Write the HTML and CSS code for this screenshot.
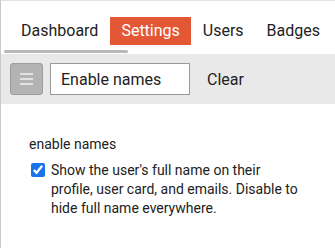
FILE: index.html
```html
<!DOCTYPE html>
<html lang="en">
<head>
    <meta charset="UTF-8">
    <meta name="viewport" content="width=device-width, initial-scale=1.0">
    <title>Admin Settings</title>
    <link rel="stylesheet" href="styles.css">
</head>
<body>
    <div class="admin-page">
        <nav class="admin-nav">
            <a class="nav-tab" href="#">Dashboard</a>
            <a class="nav-tab active" href="#">Settings</a>
            <a class="nav-tab" href="#">Users</a>
            <a class="nav-tab" href="#">Badges</a>
        </nav>
        <div class="nav-scroll"></div>

        <div class="filter-bar">
            <button class="menu-toggle" title="Menu">
                <span></span><span></span><span></span>
            </button>
            <input type="text" class="filter-input" value="Enable names" />
            <button class="clear-button">Clear</button>
        </div>

        <div class="setting">
            <div class="setting-name">enable names</div>
            <label class="setting-value">
                <input type="checkbox" checked />
                <span>Show the user's full name on their profile, user card, and emails. Disable to hide full name everywhere.</span>
            </label>
        </div>
    </div>
</body>
</html>
```

FILE: styles.css
```css
body {
    margin: 0;
    padding: 0;
    background-color: white;
    font-family: Roboto, 'Liberation Sans', Arial, sans-serif;
    color: #222;
}

.admin-page {
    border-top: 1px solid #e2e2e2;
    border-left: 1px solid #c8c8c8;
    min-height: 248px;
    box-sizing: border-box;
}

.admin-nav {
    display: flex;
    gap: 1px;
    padding: 16px 0 0 9px;
}

.nav-tab {
    display: block;
    padding: 0 11px;
    height: 28px;
    line-height: 28px;
    font-size: 16px;
    color: #222;
    text-decoration: none;
    white-space: nowrap;
}

.nav-tab.active {
    background-color: #e45735;
    color: white;
}

.nav-scroll {
    width: 124px;
    height: 3px;
    margin: 5px 0 1px 3px;
    background-color: #b9b9b9;
    border-radius: 2px;
}

.filter-bar {
    background-color: #e9e9e9;
    display: flex;
    align-items: center;
    gap: 7px;
    padding: 9px 9px;
}

.menu-toggle {
    width: 33px;
    height: 32px;
    padding: 0;
    background-color: #b3b3b3;
    border: 1px solid #9d9d9d;
    border-radius: 3px;
    display: flex;
    flex-direction: column;
    align-items: center;
    justify-content: center;
    gap: 3px;
}

.menu-toggle span {
    display: block;
    width: 13px;
    height: 2px;
    background-color: #e2e2e2;
}

.filter-input {
    width: 140px;
    height: 32px;
    box-sizing: border-box;
    padding: 0 10px;
    border: 1px solid #999;
    background-color: white;
    font-family: inherit;
    font-size: 16px;
    color: #222;
}

.clear-button {
    background: none;
    border: none;
    padding: 0 10px;
    font-family: inherit;
    font-size: 16px;
    color: #222;
}

.setting {
    padding: 31px 34px 0 28px;
    font-size: 14px;
    line-height: 19px;
}

.setting-name {
    margin-bottom: 7px;
}

.setting-value {
    display: flex;
    align-items: flex-start;
    gap: 6px;
}

.setting-value input {
    width: 14px;
    height: 14px;
    margin: 2px 0 0 2px;
    flex-shrink: 0;
    accent-color: #1a73e8;
}
```
